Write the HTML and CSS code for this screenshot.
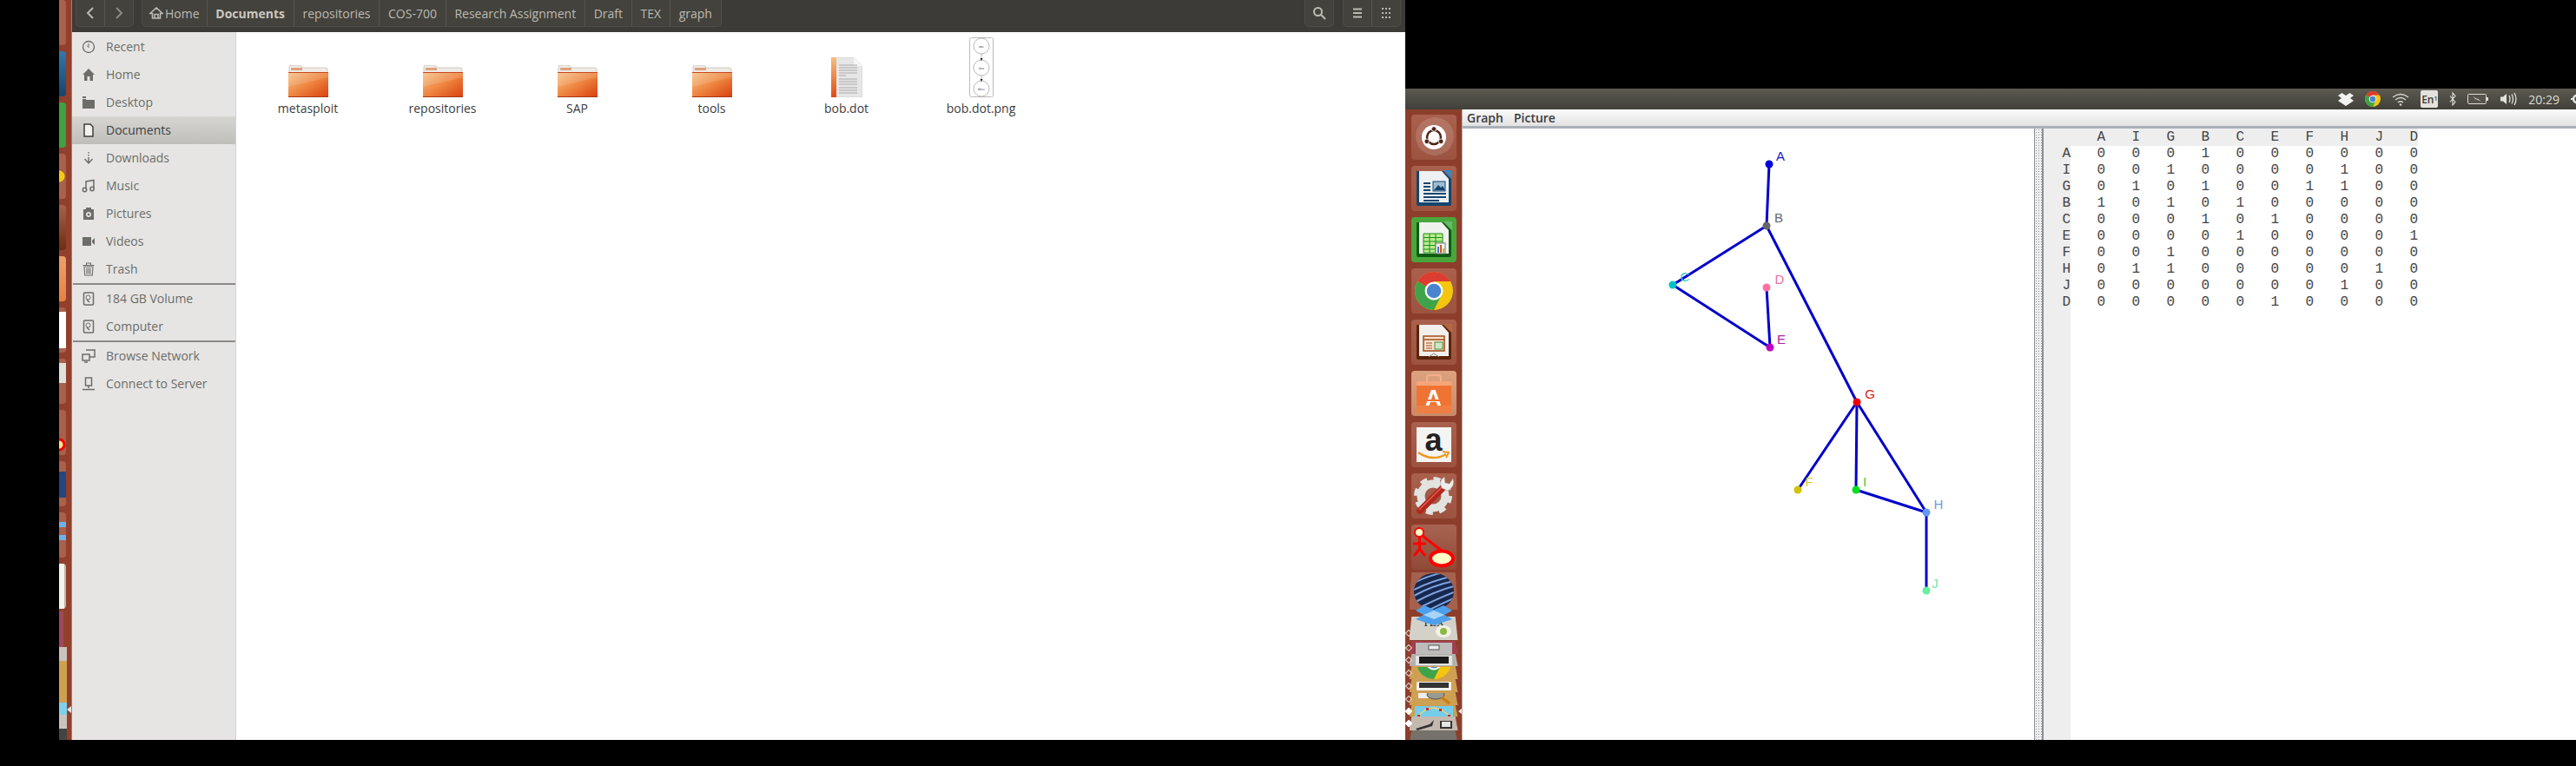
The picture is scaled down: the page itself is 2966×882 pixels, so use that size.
FILE: index.html
```html
<!DOCTYPE html>
<html>
<head>
    <title>graph</title>
    <link rel="stylesheet" href="styles.css">
</head>
<body>
    <!-- shared icons -->
    <svg class="defs" width="0" height="0">
        <defs>
            <linearGradient id="folderFill" x1="0" y1="0" x2="1" y2="1">
                <stop offset="0" stop-color="#f6c48a"/>
                <stop offset="0.5" stop-color="#ee8540"/>
                <stop offset="1" stop-color="#da3f0e"/>
            </linearGradient>
            <symbol id="folder" viewBox="0 0 46 37">
                <path d="M1 2q0-2 2-2h10l4 3h26q2 0 2 2v12H1z" fill="#efeae5" stroke="#c8c0b8" stroke-width=".8"/>
                <rect x="3" y="3" width="13" height="3" fill="#dca27e"/>
                <rect x="0" y="8" width="46" height="29" rx="1" fill="url(#folderFill)"/>
                <path d="M0 8h46v1H0z" fill="#c8461c"/>
                <path d="M0 36h46v1H0z" fill="#a93810"/>
                <path d="M0 25L46 14V9H0z" fill="#fff" opacity=".12"/>
            </symbol>
            <symbol id="chrome" viewBox="0 0 40 40">
                <circle cx="20" cy="20" r="20" fill="#f4c60e"/>
                <path d="M20 20L2.700 10A20 20 0 0 1 37.300 10H20z" fill="#dc3c32"/>
                <path d="M20 20L2.700 10A20 20 0 0 0 20 40l8-16z" fill="#3fa34a"/>
                <circle cx="20" cy="20" r="9.500" fill="#fff"/>
                <circle cx="20" cy="20" r="7.500" fill="#4a84cf"/>
            </symbol>
            <symbol id="drive" viewBox="0 0 16 16">
                <rect x="2.500" y="1" width="11" height="14" rx="1" fill="none" stroke="currentColor" stroke-width="1.500"/>
                <circle cx="7.500" cy="6.500" r="2.500" fill="none" stroke="currentColor"/>
                <path d="M6 9l3 3" stroke="currentColor" stroke-width="1.500"/>
            </symbol>
        </defs>
    </svg>

    <div class="stub-launcher">
        <div class="stub stub-plain"></div>
        <div class="stub stub-blue"></div>
        <div class="stub stub-green"></div>
        <div class="stub stub-yellow"></div>
        <div class="stub stub-brown"></div>
        <div class="stub stub-orange"></div>
        <div class="stub stub-white"></div>
        <div class="stub stub-gear"></div>
        <div class="stub stub-red"></div>
        <div class="stub stub-globe"></div>
        <div class="stub stub-arrows"></div>
        <div class="stub stub-paper"></div>
        <div class="stub-pile">
            <div class="pile pile-rose"></div>
            <div class="pile pile-grey"></div>
            <div class="pile pile-gold"></div>
            <div class="pile pile-gold"></div>
            <div class="pile pile-gold"></div>
            <div class="pile pile-sky"></div>
            <div class="pile pile-grey"></div>
            <div class="pile pile-dark"></div>
        </div>
        <span class="stub-arrow"></span>
    </div>

    <div class="files">
        <div class="files-header">
            <div class="btn-group">
                <div class="btn btn-nav">
                    <svg width="10" height="14" viewBox="0 0 10 14"><path d="M8 1L2 7l6 6" fill="none" stroke="#bab8b0" stroke-width="2"/></svg>
                </div>
                <div class="btn btn-nav">
                    <svg width="10" height="14" viewBox="0 0 10 14"><path d="M2 1l6 6-6 6" fill="none" stroke="#8d8b84" stroke-width="2"/></svg>
                </div>
            </div>
            <div class="btn-group crumbs">
                <div class="crumb crumb-home">
                    <svg width="16" height="14" viewBox="0 0 16 14"><path d="M8 1L1 7.500h2.500V13h9V7.500H15zM6 13V8.500h4V13" fill="none" stroke="#bdbab2" stroke-width="1.600"/></svg>
                    Home
                </div>
                <div class="crumb crumb-now">Documents</div>
                <div class="crumb">repositories</div>
                <div class="crumb">COS-700</div>
                <div class="crumb">Research Assignment</div>
                <div class="crumb">Draft</div>
                <div class="crumb">TEX</div>
                <div class="crumb">graph</div>
            </div>
            <div class="btn-group tool-search">
                <div class="btn btn-tool">
                    <svg width="16" height="16" viewBox="0 0 16 16"><circle cx="6.500" cy="6.500" r="4.500" fill="none" stroke="#bdbab2" stroke-width="2"/><path d="M10 10l5 5" stroke="#bdbab2" stroke-width="2"/></svg>
                </div>
            </div>
            <div class="btn-group">
                <div class="btn btn-tool">
                    <svg width="12" height="12" viewBox="0 0 12 12"><path d="M1 1.500h10M1 6h10M1 10.500h10" stroke="#bdbab2" stroke-width="2"/></svg>
                </div>
                <div class="btn btn-tool">
                    <svg width="12" height="12" viewBox="0 0 12 12"><path d="M1 0h2v2H1zM5 0h2v2H5zM9 0h2v2H9zM1 5h2v2H1zM5 5h2v2H5zM9 5h2v2H9zM1 10h2v2H1zM5 10h2v2H5zM9 10h2v2H9z" fill="#bdbab2"/></svg>
                </div>
            </div>
        </div>

        <div class="files-body">
            <div class="sidebar">
                <div class="place">
                    <svg width="16" height="16" viewBox="0 0 16 16"><circle cx="8" cy="8" r="6.500" fill="none" stroke="currentColor" stroke-width="1.300"/><path d="M8 4v4.500l-2-2" fill="none" stroke="currentColor"/></svg>
                    Recent
                </div>
                <div class="place">
                    <svg width="16" height="16" viewBox="0 0 16 16"><path d="M8 1L1 8h2v7h3.500v-5h3v5H13V8h2z" fill="currentColor"/></svg>
                    Home
                </div>
                <div class="place">
                    <svg width="16" height="16" viewBox="0 0 16 16"><path d="M1 1h4v2H1zM1 4h14v11H1z" fill="currentColor"/><path d="M5 4h10v1H5z" fill="#e6e5e3"/></svg>
                    Desktop
                </div>
                <div class="place place-on">
                    <svg width="16" height="16" viewBox="0 0 16 16"><path d="M3 1h7l3 3v11H3z" fill="#f2f1ef" stroke="currentColor" stroke-width="1.500"/></svg>
                    Documents
                </div>
                <div class="place">
                    <svg width="16" height="16" viewBox="0 0 16 16"><path d="M8 1v1.500M8 4v1.500M8 7v6M3.500 9L8 14l4.500-5" fill="none" stroke="currentColor" stroke-width="1.400"/></svg>
                    Downloads
                </div>
                <div class="place">
                    <svg width="16" height="16" viewBox="0 0 16 16"><path d="M5 12V3l9-1.500V11" fill="none" stroke="currentColor" stroke-width="1.500"/><circle cx="3.500" cy="12.500" r="2.200" fill="none" stroke="currentColor" stroke-width="1.500"/><circle cx="12" cy="11.500" r="2.200" fill="none" stroke="currentColor" stroke-width="1.500"/></svg>
                    Music
                </div>
                <div class="place">
                    <svg width="16" height="16" viewBox="0 0 16 16"><path d="M2 3h3V1h6v2h3v12H2z" fill="currentColor"/><circle cx="8" cy="9" r="3" fill="#e6e5e3"/><circle cx="8" cy="9" r="1.300" fill="currentColor"/></svg>
                    Pictures
                </div>
                <div class="place">
                    <svg width="16" height="16" viewBox="0 0 16 16"><path d="M1 3h10v10H1zM12 7l3-3v8l-3-3z" fill="currentColor"/></svg>
                    Videos
                </div>
                <div class="place">
                    <svg width="16" height="16" viewBox="0 0 16 16"><path d="M1.500 3.500h13M5.500 3V1h5v2M3 5h10l-.7 10H3.700zM6 6.500v7M8 6.500v7M10 6.500v7" fill="none" stroke="currentColor" stroke-width="1.100"/></svg>
                    Trash
                </div>
                <div class="place-sep"></div>
                <div class="place">
                    <svg width="16" height="16"><use href="#drive"/></svg>
                    184 GB Volume
                </div>
                <div class="place">
                    <svg width="16" height="16"><use href="#drive"/></svg>
                    Computer
                </div>
                <div class="place-sep"></div>
                <div class="place">
                    <svg width="16" height="16" viewBox="0 0 16 16"><path d="M5 1h10v8H9M1 6h8v7H1zM3 15h4" fill="none" stroke="currentColor" stroke-width="1.500"/></svg>
                    Browse Network
                </div>
                <div class="place">
                    <svg width="16" height="16" viewBox="0 0 16 16"><path d="M4.500 1h7v9h-7zM8 10v3M1 14.500h14" fill="none" stroke="currentColor" stroke-width="1.500"/></svg>
                    Connect to Server
                </div>
            </div>

            <div class="grid">
                <div class="item"><svg width="46" height="37"><use href="#folder"/></svg><span>metasploit</span></div>
                <div class="item"><svg width="46" height="37"><use href="#folder"/></svg><span>repositories</span></div>
                <div class="item"><svg width="46" height="37"><use href="#folder"/></svg><span>SAP</span></div>
                <div class="item"><svg width="46" height="37"><use href="#folder"/></svg><span>tools</span></div>
                <div class="item">
                    <svg width="36" height="46" viewBox="0 0 36 46">
                        <defs>
                            <linearGradient id="docEdge" x1="0" y1="0" x2="0" y2="1">
                                <stop offset="0" stop-color="#f4c080"/>
                                <stop offset="1" stop-color="#e04a14"/>
                            </linearGradient>
                        </defs>
                        <path d="M0 0h26l10 10v36H0z" fill="#e6e6e6" stroke="#c8c8c8" stroke-width=".6"/>
                        <path d="M26 0l10 10H26z" fill="#f6f6f6"/>
                        <rect width="6" height="46" fill="url(#docEdge)"/>
                        <path d="M9 9h21M9 12h21M9 15h21M9 18h21M9 21h8M9 25h21M9 28h21M9 31h21M9 35h21M9 38h21M9 41h21" stroke="#a9a9a9"/>
                    </svg>
                    <span>bob.dot</span>
                </div>
                <div class="item">
                    <svg width="28" height="69" viewBox="0 0 28 69">
                        <rect x=".5" y=".5" width="27" height="68" rx="2" fill="#fff" stroke="#bbb"/>
                        <g fill="none" stroke="#999" stroke-width=".7">
                            <circle cx="14" cy="10" r="9"/>
                            <circle cx="14" cy="35" r="9"/>
                            <circle cx="14" cy="59" r="9"/>
                            <path d="M14 19v7M14 44v6"/>
                        </g>
                        <path d="M12.500 24h3L14 27zM12.500 48h3L14 51z" fill="#222"/>
                        <g class="thumb-label">
                            <text x="14" y="11.500">one</text>
                            <text x="14" y="36.500">two</text>
                            <text x="14" y="60.500">three</text>
                        </g>
                    </svg>
                    <span>bob.dot.png</span>
                </div>
            </div>
        </div>
    </div>

    <div class="screen">
        <div class="panel">
            <svg class="tray" width="18" height="16" viewBox="0 0 18 16"><path d="M0 4l4.500-3L9 4l4.500-3L18 4l-4 3 4 3-4.500 3L9 16l-4.500-3L0 10l4-3z" fill="#f2f2f0"/></svg>
            <svg class="tray" width="18" height="18"><use href="#chrome"/></svg>
            <svg class="tray" width="20" height="16" viewBox="0 0 20 16"><g fill="none" stroke="#d8d6d0" stroke-width="1.300"><path d="M1 6q9-7 18 0"/><path d="M4 9q6-5 12 0"/><path d="M7 12q3-2.500 6 0"/></g><circle cx="10" cy="14.500" r="1.300" fill="#d8d6d0"/></svg>
            <div class="lang">En<sub>1</sub></div>
            <svg class="tray" width="8" height="16" viewBox="0 0 8 16"><path d="M1 4.500l6 7-3 3.500V1l3 3.500-6 7" fill="none" stroke="#e4e2dc" stroke-width="1.100"/></svg>
            <svg class="tray" width="24" height="12" viewBox="0 0 24 12"><rect x=".5" y=".5" width="21" height="11" rx="1" fill="#55534b" stroke="#dddbd4"/><path d="M22 4h2v4h-2z" fill="#dddbd4"/><path d="M6 3l6 3.500L11 5l5 4-6-3 1 1.500z" fill="#e4e2dc"/></svg>
            <svg class="tray" width="20" height="16" viewBox="0 0 20 16"><path d="M1 5.500h3L8 2v12l-4-3.500H1z" fill="#e4e2dc"/><path d="M11 4q2 4 0 8M14 2.500q3 5.500 0 11M17 1q4 7 0 14" fill="none" stroke="#e4e2dc" stroke-width="1.300"/></svg>
            <span class="clock">20:29</span>
            <svg class="tray" width="14" height="14" viewBox="0 0 14 14"><circle cx="7" cy="7" r="4" fill="none" stroke="#e4e2dc" stroke-width="2.500"/><path d="M6 0h2v3H6zM6 11h2v3H6zM0 6h3v2H0zM11 6h3v2h-3z" fill="#e4e2dc"/></svg>
        </div>

        <div class="desktop">
            <div class="launcher">
                <div class="tile">
                    <svg width="52" height="52" viewBox="0 0 52 52">
                        <circle cx="27" cy="25" r="22" fill="#fff" opacity=".14"/>
                        <circle cx="26" cy="26" r="14" fill="#fff"/>
                        <circle cx="26" cy="26" r="8" fill="none" stroke="#4f2416" stroke-width="2.500"/>
                        <circle cx="26" cy="16.500" r="2.800" fill="#4f2416" stroke="#fff" stroke-width=".8"/>
                        <circle cx="17.800" cy="30.800" r="2.800" fill="#4f2416" stroke="#fff" stroke-width=".8"/>
                        <circle cx="34.200" cy="30.800" r="2.800" fill="#4f2416" stroke="#fff" stroke-width=".8"/>
                    </svg>
                </div>
                <div class="tile">
                    <svg width="52" height="52" viewBox="0 0 52 52">
                        <path d="M6 6h31l9 9v29q0 2-2 2H8q-2 0-2-2z" fill="#15456e"/>
                        <path d="M37 5l10 10V5z" fill="#3b85b8"/>
                        <path d="M9 6h26l8 9v27H9z" fill="#edf1f4"/>
                        <path d="M14 20h8M14 24h8M14 28h8M14 32h26M14 36h26M14 40h18" stroke="#15456e" stroke-width="2"/>
                        <rect x="25" y="18" width="14" height="11" fill="#9dbdd2" stroke="#15456e"/>
                        <path d="M26 28l5-6 3 3 2-2 3 5z" fill="#15456e"/>
                    </svg>
                </div>
                <div class="tile tile-green">
                    <svg width="52" height="52" viewBox="0 0 52 52">
                        <path d="M6 6h31l9 9v29q0 2-2 2H8q-2 0-2-2z" fill="#0e5c14"/>
                        <path d="M37 5l10 10V5z" fill="#6bb86a"/>
                        <path d="M9 6h26l8 9v27H9z" fill="#f0f2ee"/>
                        <path d="M14 19h22v22H14z" fill="#b9ec8c" stroke="#1f8d1f"/>
                        <path d="M14 23.500h22M14 28h22M14 32.500h22M14 37h22M21 19v22M28 19v22" stroke="#1f8d1f"/>
                        <rect x="28" y="30" width="11" height="12" fill="#f4f4f4" stroke="#777"/>
                        <path d="M30 34h2v7h-2z" fill="#3d7fc2"/><path d="M33 32h2v9h-2z" fill="#d9541e"/><path d="M36 36h2v5h-2z" fill="#e5b32a"/>
                    </svg>
                </div>
                <div class="tile">
                    <svg class="tile-fit" width="44" height="44"><use href="#chrome"/></svg>
                </div>
                <div class="tile">
                    <svg width="52" height="52" viewBox="0 0 52 52">
                        <path d="M6 6h31l9 9v29q0 2-2 2H8q-2 0-2-2z" fill="#5a2408"/>
                        <path d="M37 5l10 10V5z" fill="#b5693e"/>
                        <path d="M9 6h26l8 9v27H9z" fill="#f2efec"/>
                        <rect x="14" y="19" width="24" height="17" fill="#f8e2cf" stroke="#a04c1a" stroke-width="1.500"/>
                        <path d="M14 23h24" stroke="#a04c1a" stroke-width="1.500"/>
                        <path d="M17 27h7M17 30h7M17 33h7" stroke="#a04c1a"/>
                        <rect x="27" y="26" width="9" height="8" fill="#cfe6c6" stroke="#4a8a3a"/>
                        <path d="M20 43l6-4 6 4" fill="none" stroke="#888"/>
                    </svg>
                </div>
                <div class="tile tile-store">
                    <svg width="52" height="52" viewBox="0 0 52 52">
                        <path d="M18 12V8q0-3 3-3h10q3 0 3 3v4" fill="none" stroke="#f5b08a" stroke-width="2"/>
                        <path d="M6 12h40v35q0 2-2 2H8q-2 0-2-2z" fill="#ef7433"/>
                        <path d="M6 12h40l1 5H5z" fill="#f6a57a"/>
                        <path d="M6 40h40v9H6z" fill="#fff" opacity=".08"/>
                    </svg>
                    <span class="store-mark">A</span>
                </div>
                <div class="tile">
                    <div class="amazon">
                        <span>a</span>
                        <svg width="38" height="12" viewBox="0 0 38 12"><path d="M1 2q16 11 32 2" fill="none" stroke="#f0961a" stroke-width="2.500"/><path d="M29 1l7 1-3 6" fill="none" stroke="#f0961a" stroke-width="2"/></svg>
                    </div>
                </div>
                <div class="tile">
                    <svg width="52" height="52" viewBox="0 0 52 52">
                        <circle cx="25" cy="26" r="14" fill="none" stroke="#e2e2df" stroke-width="9"/>
                        <circle cx="25" cy="26" r="19.500" fill="none" stroke="#e2e2df" stroke-width="5" stroke-dasharray="8 7.300"/>
                        <path d="M10 43L38 15" stroke="#b3261e" stroke-width="7.500" stroke-linecap="round"/>
                        <path d="M9 42L36 15" stroke="#e2604f" stroke-width="1.500"/>
                        <path d="M35 17q-4-8 3-13l1 7 5 1 4-6q3 9-6 14z" fill="#ededeb" stroke="#999" stroke-width=".5"/>
                    </svg>
                </div>
                <div class="tile tile-uml">
                    <svg width="52" height="52" viewBox="0 0 52 52">
                        <path d="M13 13l23 18" stroke="#f00" stroke-width="3"/>
                        <circle cx="9" cy="9" r="5" fill="#ffffc8" stroke="#f00" stroke-width="2"/>
                        <path d="M2 22h15M9.500 14v14M3 36l6.500-8 6.500 8" fill="none" stroke="#f00" stroke-width="3"/>
                        <ellipse cx="35" cy="39" rx="13" ry="8.500" fill="#ffffc8" stroke="#f00" stroke-width="4"/>
                    </svg>
                </div>
                <div class="fold-stack">
                    <div class="fold fold-globe">
                        <svg class="globe" width="46" height="44" viewBox="0 0 46 44">
                            <defs><clipPath id="ball"><ellipse cx="23" cy="22" rx="23" ry="21"/></clipPath></defs>
                            <ellipse cx="23" cy="22" rx="23" ry="21" fill="#17284f"/>
                            <g clip-path="url(#ball)" fill="none" stroke="#7fa3dd" stroke-width="2">
                                <path d="M0 12q16-8 34-12M0 20q20-10 46-16M0 27q22-12 46-17M2 34q22-12 44-18M8 40q20-10 38-17M16 44q16-8 30-14"/>
                            </g>
                        </svg>
                    </div>
                    <div class="fold fold-box">
                        <svg width="42" height="23" viewBox="0 0 42 23"><path d="M0 6L10 0l11 5 11-5 10 6-9 5 9 5-21 7-21-7 9-5z" fill="#4da0ec"/><path d="M9 11l12-5 12 5-12 5z" fill="#a8d4fa"/></svg>
                    </div>
                    <div class="fold fold-tex">
                        <span class="tex-mark">TEX</span>
                        <svg class="tex-badge" width="18" height="14" viewBox="0 0 18 14"><ellipse cx="9" cy="7" rx="9" ry="7" fill="#f1f1ea"/><circle cx="9" cy="7" r="4" fill="#8ab93e"/></svg>
                        <span class="pip pip-low"></span>
                    </div>
                    <div class="fold fold-rose">
                        <svg width="42" height="13" viewBox="0 0 42 13"><rect width="42" height="13" fill="#bdbcbb"/><rect x="15" y="3" width="12" height="5" fill="#eee" stroke="#555"/></svg>
                        <span class="pip"></span>
                    </div>
                    <div class="fold fold-silver">
                        <svg width="42" height="11" viewBox="0 0 42 11"><rect width="42" height="11" fill="#e4e3e0"/><rect x="4" y="1" width="34" height="8" fill="#1b1b1b"/></svg>
                        <span class="pip"></span>
                    </div>
                    <div class="fold fold-gold fold-cut">
                        <svg class="fold-chrome" width="40" height="40"><use href="#chrome"/></svg>
                        <span class="pip"></span>
                    </div>
                    <div class="fold fold-gold">
                        <svg width="40" height="10" viewBox="0 0 40 10"><rect width="40" height="10" rx="1" fill="#f4f2ef"/><rect x="3" y="1" width="34" height="6" fill="#333"/></svg>
                        <span class="pip"></span>
                    </div>
                    <div class="fold fold-gold">
                        <svg width="44" height="14" viewBox="0 0 44 14"><path d="M4 0h12v6H4z" fill="#eee"/><ellipse cx="24" cy="2" rx="10" ry="5" fill="#9a9a94" stroke="#555"/><path d="M31 5l9 7" stroke="#c97d10" stroke-width="3"/></svg>
                        <span class="pip"></span>
                    </div>
                    <div class="fold fold-sky">
                        <svg width="44" height="12" viewBox="0 0 44 12"><path d="M4 11L14 3l8-1 8 2 10 7" fill="none" stroke="#f3d070" stroke-width="1.500"/><path d="M3 10h3v2H3zM13 2h3v3h-3zM28 3h3v3h-3zM38 10h3v2h-3z" fill="#d8281c"/></svg>
                        <span class="pip pip-solid"></span>
                        <span class="pip-right"></span>
                    </div>
                    <div class="fold fold-ash">
                        <svg width="46" height="14" viewBox="0 0 46 14"><path d="M2 12l16-5 5-5-2 7-17 5zM30 3h14v9H30z" fill="#333"/><path d="M32 4h10v6H32z" fill="#e6e4e0"/></svg>
                        <span class="pip pip-solid"></span>
                    </div>
                    <div class="fold fold-end"></div>
                </div>
            </div>

            <div class="app">
                <div class="menubar">
                    <span>Graph</span>
                    <span>Picture</span>
                </div>
                <div class="split">
                    <div class="canvas">
                        <svg class="graph" width="658" height="704" viewBox="1684 148 658 704">
                            <g class="edges">
                                <line x1="2037" y1="189" x2="2034" y2="260"/>
                                <line x1="2034" y1="260" x2="1926" y2="328"/>
                                <line x1="2034" y1="260" x2="2138" y2="463"/>
                                <line x1="1926" y1="328" x2="2038" y2="400"/>
                                <line x1="2038" y1="400" x2="2034" y2="331"/>
                                <line x1="2138" y1="463" x2="2070" y2="564"/>
                                <line x1="2138" y1="463" x2="2137" y2="564"/>
                                <line x1="2138" y1="463" x2="2218" y2="590"/>
                                <line x1="2137" y1="564" x2="2218" y2="590"/>
                                <line x1="2218" y1="590" x2="2218" y2="680"/>
                            </g>
                            <circle cx="2037" cy="189" r="4.500" fill="#0000dd"/>
                            <circle cx="2034" cy="260" r="4.500" fill="#666666"/>
                            <circle cx="1926" cy="328" r="4.500" fill="#00c4c4"/>
                            <circle cx="2034" cy="331" r="4.500" fill="#ff6fa0"/>
                            <circle cx="2038" cy="400" r="4.500" fill="#c000c0"/>
                            <circle cx="2138" cy="463" r="4.500" fill="#ee0000"/>
                            <circle cx="2070" cy="564" r="4.500" fill="#d0c400"/>
                            <circle cx="2137" cy="564" r="4.500" fill="#00e020"/>
                            <circle cx="2218" cy="590" r="4.500" fill="#6699ee"/>
                            <circle cx="2218" cy="680" r="4.500" fill="#66f0a0"/>
                            <g class="labels">
                                <text x="2050" y="185" fill="#1a1ac8">A</text>
                                <text x="2048" y="256" fill="#666666">B</text>
                                <text x="1940" y="324" fill="#30c8c8">C</text>
                                <text x="2049" y="327" fill="#f070a0">D</text>
                                <text x="2051" y="396" fill="#b020a8">E</text>
                                <text x="2153" y="459" fill="#d02020">G</text>
                                <text x="2083" y="560" fill="#d8cc30">F</text>
                                <text x="2147" y="560" fill="#40c840">I</text>
                                <text x="2232" y="586" fill="#6f9ae0">H</text>
                                <text x="2228" y="677" fill="#70e8b0">J</text>
                            </g>
                        </svg>
                    </div>
                    <div class="grip"></div>
                    <div class="matrix-pane">
                        <table class="matrix">
                            <tr><th></th><th>A</th><th>I</th><th>G</th><th>B</th><th>C</th><th>E</th><th>F</th><th>H</th><th>J</th><th>D</th></tr>
                            <tr><th>A</th><td>0</td><td>0</td><td>0</td><td>1</td><td>0</td><td>0</td><td>0</td><td>0</td><td>0</td><td>0</td></tr>
                            <tr><th>I</th><td>0</td><td>0</td><td>1</td><td>0</td><td>0</td><td>0</td><td>0</td><td>1</td><td>0</td><td>0</td></tr>
                            <tr><th>G</th><td>0</td><td>1</td><td>0</td><td>1</td><td>0</td><td>0</td><td>1</td><td>1</td><td>0</td><td>0</td></tr>
                            <tr><th>B</th><td>1</td><td>0</td><td>1</td><td>0</td><td>1</td><td>0</td><td>0</td><td>0</td><td>0</td><td>0</td></tr>
                            <tr><th>C</th><td>0</td><td>0</td><td>0</td><td>1</td><td>0</td><td>1</td><td>0</td><td>0</td><td>0</td><td>0</td></tr>
                            <tr><th>E</th><td>0</td><td>0</td><td>0</td><td>0</td><td>1</td><td>0</td><td>0</td><td>0</td><td>0</td><td>1</td></tr>
                            <tr><th>F</th><td>0</td><td>0</td><td>1</td><td>0</td><td>0</td><td>0</td><td>0</td><td>0</td><td>0</td><td>0</td></tr>
                            <tr><th>H</th><td>0</td><td>1</td><td>1</td><td>0</td><td>0</td><td>0</td><td>0</td><td>0</td><td>1</td><td>0</td></tr>
                            <tr><th>J</th><td>0</td><td>0</td><td>0</td><td>0</td><td>0</td><td>0</td><td>0</td><td>1</td><td>0</td><td>0</td></tr>
                            <tr><th>D</th><td>0</td><td>0</td><td>0</td><td>0</td><td>0</td><td>1</td><td>0</td><td>0</td><td>0</td><td>0</td></tr>
                        </table>
                    </div>
                </div>
            </div>
        </div>
    </div>
</body>
</html>
```

FILE: styles.css
```css
html, body {
    margin: 0;
    padding: 0;
    height: 882px;
    overflow: hidden;
    background-color: #000000;
}

body {
    display: flex;
    align-items: flex-start;
    padding-left: 68px;
    font-family: "Open Sans", sans-serif;
}

.defs {
    position: absolute;
}

svg {
    display: block;
    flex: none;
}

/* sliver of launcher left of the file manager */
.stub-launcher {
    position: relative;
    width: 14px;
    height: 852px;
    flex: none;
    overflow: hidden;
    background-color: #92402c;
    border-right: 1px solid #c56f59;
    display: flex;
    flex-direction: column;
    gap: 7px;
}

.stub {
    width: 8px;
    height: 52px;
    flex: none;
    background-color: #a9604c;
    border-radius: 0 4px 4px 0;
}

.stub-blue { background: linear-gradient(#2f79ad, #17436a); }
.stub-green { background: #3fa23f; }
.stub-yellow { background: radial-gradient(circle at 0 26px, #f6c90e 6px, #a9604c 7px); }
.stub-brown { background: linear-gradient(#a9604c, #6e2c10); }
.stub-orange { background: linear-gradient(#eea06c, #e9813f); }
.stub-white { background: linear-gradient(#a9604c 0 5px, #ffffff 5px 47px, #a9604c 47px); }
.stub-gear { background: linear-gradient(#a9604c 0 5px, #e0e0dd 5px 28px, #a9604c 28px); }
.stub-red { background: radial-gradient(circle at 0 40px, #ffe08a 4px, #ee0000 5px, #ee0000 7px, #a9604c 8px); }
.stub-globe { background: linear-gradient(#a9604c 0 12px, #27457f 12px 42px, #a9604c 42px); }
.stub-arrows { background: linear-gradient(#a9604c 0 11px, #6cb3ee 11px 17px, #a9604c 17px 26px, #6cb3ee 26px 32px, #a9604c 32px); }
.stub-paper { background: linear-gradient(90deg, #f4f3ef 6px, #bcb9a8 6px); }

.stub-pile {
    display: flex;
    flex-direction: column;
    margin-top: -4px;
}

.pile {
    height: 16px;
    width: 9px;
    flex: none;
}

.pile-rose { height: 41px; width: 5px; background-color: #a2485a; }
.pile-grey { background-color: #c9c4bd; }
.pile-gold { background-color: #cfa04f; }
.pile-sky { height: 14px; background-color: #7fd0ea; }
.pile-dark { background-color: #444444; }

.stub-arrow {
    position: absolute;
    right: 0;
    top: 813px;
    border: 4px solid transparent;
    border-right: 5px solid #e8e4e0;
    border-left: none;
}

/* file manager */
.files {
    width: 1535px;
    height: 852px;
    flex: none;
    display: flex;
    flex-direction: column;
    background-color: #ffffff;
}

.files-header {
    height: 37px;
    flex: none;
    display: flex;
    padding: 0 5px 0 4px;
    box-sizing: border-box;
    background-color: #3c3b37;
}

.btn-group {
    display: flex;
    height: 31px;
    box-sizing: border-box;
    background-color: #43423d;
    border: 1px solid #4e4d48;
    border-top: none;
    border-radius: 0 0 5px 5px;
}

.btn {
    display: flex;
    align-items: center;
    justify-content: center;
}

.btn + .btn {
    border-left: 1px solid #55544e;
}

.btn-nav {
    width: 32px;
}

.btn-tool {
    width: 32px;
}

.crumbs {
    margin-left: 9px;
    margin-right: auto;
}

.tool-search {
    margin-right: 10px;
}

.crumb {
    display: flex;
    align-items: center;
    padding: 0 9.750px;
    font-size: 14px;
    color: #bdbab2;
    white-space: nowrap;
}

.crumb + .crumb {
    border-left: 1px solid #55544e;
}

.crumb-home {
    gap: 2px;
    padding: 0 8px;
}

.crumb-now {
    font-weight: 700;
    color: #cbc8c0;
}

.files-body {
    flex: 1;
    display: flex;
    min-height: 0;
}

.sidebar {
    width: 189px;
    flex: none;
    box-sizing: border-box;
    padding-top: 1px;
    background-color: #e6e5e3;
    border-right: 1px solid #d4d3d1;
}

.place {
    height: 32px;
    box-sizing: border-box;
    padding: 0 0 1px 11px;
    display: flex;
    align-items: center;
    gap: 12px;
    font-size: 14px;
    color: #6c6c69;
    white-space: nowrap;
}

.place-on {
    color: #3f3f3d;
    background: linear-gradient(#d6d5d2, #bfbebb);
}

.place-sep {
    height: 2px;
    margin: 0 0 0 1px;
    background-color: #8b8b88;
}

.grid {
    flex: 1;
    display: flex;
    align-items: flex-start;
    padding: 8px 0 0 5px;
}

.item {
    width: 155px;
    height: 69px;
    display: flex;
    flex-direction: column;
    align-items: center;
    justify-content: flex-end;
    font-size: 14px;
    color: #3c3c3c;
    position: relative;
}

.item span {
    position: absolute;
    top: 70px;
    line-height: 20px;
}

.item svg {
    margin-bottom: 2px;
}

.thumb-label text {
    font-family: "Liberation Serif", serif;
    font-size: 4px;
    fill: #333333;
    text-anchor: middle;
}

/* right hand screen */
.screen {
    flex: 1;
    min-width: 0;
    height: 750px;
    margin-top: 102px;
    display: flex;
    flex-direction: column;
}

.panel {
    height: 24px;
    flex: none;
    display: flex;
    align-items: center;
    justify-content: flex-end;
    gap: 13px;
    margin-right: -8px;
    background: linear-gradient(#5c5a50, #403f3a);
}

.lang {
    width: 20px;
    height: 20px;
    display: flex;
    align-items: center;
    justify-content: center;
    border-radius: 2px;
    background-color: #e4e2dc;
    color: #3c3b37;
    font-size: 12px;
    font-weight: 600;
}

.lang sub {
    font-size: 7px;
    line-height: 0;
}

.clock {
    font-size: 14px;
    color: #dfddd6;
}

.desktop {
    flex: 1;
    min-height: 0;
    display: flex;
}

.launcher {
    position: relative;
    width: 65px;
    flex: none;
    box-sizing: content-box;
    display: flex;
    flex-direction: column;
    align-items: center;
    gap: 7px;
    padding-top: 6px;
    overflow: hidden;
    background-color: #8d3e2b;
    border-right: 1px solid #bdb0b0;
}

.tile {
    position: relative;
    width: 52px;
    height: 52px;
    flex: none;
    display: flex;
    align-items: center;
    justify-content: center;
    border-radius: 4px;
    background: linear-gradient(#a9604c, #9c5340);
}

.tile-green { background: #4aa63c; }
.tile-store { background: linear-gradient(#dda27f, #c98a68); }
.tile-uml { background: linear-gradient(#a86452, #8f4a38); }

.store-mark {
    position: absolute;
    top: 16px;
    left: 0;
    right: 0;
    text-align: center;
    font-family: "Liberation Sans", sans-serif;
    font-size: 26px;
    font-weight: 700;
    color: #ffffff;
}

.store-mark::after {
    content: "";
    position: absolute;
    left: 18px;
    top: 17px;
    width: 17px;
    height: 2px;
    background-color: #ef7433;
}

.amazon {
    width: 40px;
    height: 40px;
    display: flex;
    flex-direction: column;
    align-items: center;
    background-color: #f4f4f2;
    position: relative;
}

.amazon span {
    font-family: "Liberation Sans", sans-serif;
    font-size: 36px;
    font-weight: 700;
    line-height: 30px;
    color: #222222;
}

.amazon svg {
    margin-top: -3px;
}

/* the fold at the bottom of the launcher */
.fold-stack {
    width: 56px;
    flex: none;
    margin-top: -4px;
    display: flex;
    flex-direction: column;
}

.fold {
    position: relative;
    height: 15px;
    flex: none;
    display: flex;
    justify-content: center;
    align-items: flex-end;
}

.fold::before {
    content: "";
    position: absolute;
    inset: 0;
    clip-path: polygon(5% 0, 95% 0, 100% 100%, 0 100%);
    background-color: var(--fold-color, #aa7a50);
}

.fold svg,
.fold > span {
    position: relative;
}

.fold-globe { height: 43px; align-items: flex-start; --fold-color: #a4614e; }
.fold-box { height: 23px; margin-top: -5px; z-index: 2; --fold-color: transparent; }
.fold-tex { height: 27px; margin-top: -10px; --fold-color: #d3d1c8; }
.fold-rose { margin-top: 1px; --fold-color: #a0404e; }
.fold-silver { height: 14px; --fold-color: #b4b2ae; align-items: center; }
.fold-gold { height: 15px; --fold-color: #cf9f52; align-items: center; }
.fold-cut { align-items: flex-end; }
.fold-sky { height: 13px; --fold-color: #c7a050; }
.fold-ash { height: 16px; --fold-color: #c4b9b0; }
.fold-end { height: 16px; --fold-color: #77716b; }

.fold-sky svg {
    background-color: #74cdea;
}

.fold-chrome {
    clip-path: inset(26px 0 0 0);
}

.tex-mark {
    position: absolute !important;
    top: 2px;
    left: 0;
    right: 0;
    text-align: center;
    font-family: "Liberation Serif", serif;
    font-size: 13px;
    line-height: 10px;
    color: #222222;
}

.tex-badge {
    position: absolute !important;
    right: 8px;
    top: 10px;
}

.pip {
    position: absolute !important;
    left: -4px;
    top: 50%;
    width: 4px;
    height: 4px;
    margin-top: -3px;
    border: 1px solid #e2d8d2;
    transform: rotate(45deg);
}

.pip-low {
    top: 70%;
}

.pip-solid {
    background-color: #ffffff;
    border-color: #ffffff;
}

.pip-right {
    position: absolute !important;
    right: -5px;
    top: 3px;
    border: 4px solid transparent;
    border-right: 5px solid #e8e4e0;
    border-left: none;
}

/* graph app */
.app {
    flex: 1;
    min-width: 0;
    display: flex;
    flex-direction: column;
}

.menubar {
    height: 19px;
    flex: none;
    display: flex;
    align-items: center;
    gap: 12px;
    padding-left: 5px;
    font-size: 14px;
    font-weight: 600;
    color: #3a3a3a;
    background: linear-gradient(#fbfbfb, #e2e2e2);
    border-bottom: 3px solid #a9b0b8;
}

.split {
    flex: 1;
    min-height: 0;
    display: flex;
}

.canvas {
    width: 658px;
    flex: none;
    background-color: #ffffff;
}

.edges line {
    stroke: #0000cc;
    stroke-width: 3;
}

.labels text {
    font-family: "Liberation Sans", sans-serif;
    font-size: 15px;
    text-anchor: middle;
}

.grip {
    width: 8px;
    flex: none;
    border-left: 1px solid #8a9098;
    border-right: 2px solid #87909a;
    background-color: #eeeeee;
    background-image: radial-gradient(#9a9a9a 0.6px, transparent 0.8px);
    background-size: 3px 3px;
}

.matrix-pane {
    flex: 1;
    min-width: 0;
    background: linear-gradient(90deg, #eeeeee 31px, #ffffff 31px);
}

.matrix {
    border-collapse: collapse;
    table-layout: fixed;
    font-family: "Liberation Mono", monospace;
    font-size: 16px;
    font-weight: 400;
    color: #444444;
}

.matrix th,
.matrix td {
    width: 40px;
    height: 19px;
    padding: 0;
    font-weight: 400;
    text-align: right;
    line-height: 19px;
}

.matrix th:first-child {
    width: 31px;
}

.matrix tr:first-child th {
    height: 20px;
    background-color: #eeeeee;
}
```
